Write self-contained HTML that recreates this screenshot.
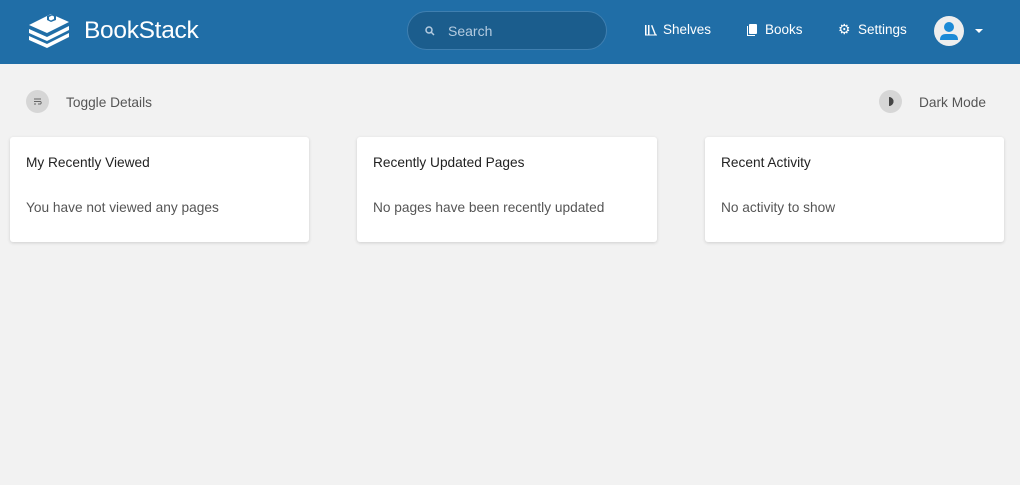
<!DOCTYPE html>
<html><head><style>
*{box-sizing:border-box;margin:0;padding:0}
body{width:1020px;height:485px;background:#f2f2f2;font-family:"Liberation Sans",sans-serif;overflow:hidden;position:relative}
.hdr{position:absolute;left:0;top:0;width:1020px;height:64px;background:#206ea7;color:#fff}
.logo{position:absolute;left:84px;top:17px;font-size:24.5px;letter-spacing:-0.3px}
.search{position:absolute;left:407px;top:11px;width:200px;height:39px;border-radius:20px;background:#1b5d8d;border:1px solid #3f7fb0}
.search span{position:absolute;left:40px;top:11px;font-size:14px;color:#b4cbe0}
.nav{position:absolute;top:22px;font-size:13.5px}
.card{position:absolute;top:137px;width:299px;height:105px;background:#fff;box-shadow:0 1px 3px rgba(0,0,0,.15);border-radius:3px}
.card h3{position:absolute;left:16px;top:18px;font-size:13.7px;font-weight:normal;color:#222}
.card p{position:absolute;left:16px;top:63px;font-size:13.7px;color:#555}
.ic{position:absolute;top:90px;width:23px;height:23px;border-radius:50%;background:#d6d6d6}
.lbl{position:absolute;top:95px;font-size:13.7px;color:#555}
</style></head><body>
<div class="hdr">
<svg style="position:absolute;left:28px;top:11px" width="42" height="38" viewBox="0 0 42 38" fill="#fff">
<path d="M1 14 L23 3 L41 11 L19 22 Z"/>
<path d="M1 18 L19 26 L41 15 L41 19 L19 30 L1 22 Z"/>
<path d="M1 25 L19 33 L41 22 L41 26 L19 37 L1 29 Z"/>
<path d="M19 5 L24 3 L28 5 L28 9 L23 11 L19 9 Z" fill="#206ea7"/>
<path d="M21 6 L24 4.5 L26 5.5 L26 8 L23 9.5 L21 8.5 Z"/>
</svg>
<div class="logo">BookStack</div>
<div class="search"><svg style="position:absolute;left:17px;top:14px" width="10" height="10" viewBox="0 0 10 10"><circle cx="4" cy="4" r="3" stroke="#b4cbe0" stroke-width="1.5" fill="none"/><path d="M6 6 L9 9" stroke="#b4cbe0" stroke-width="1.5"/></svg><span>Search</span></div>
<svg style="position:absolute;left:645px;top:24px" width="12" height="12" viewBox="0 0 12 12" fill="#fff"><rect x="0" y="1" width="1.5" height="10"/><rect x="3" y="1" width="1.5" height="10"/><path d="M6 1.5 L7.3 1 L11 10.5 L9.7 11 Z"/><rect x="0" y="10.5" width="12" height="1"/></svg>
<div class="nav" style="left:663px">Shelves</div>
<svg style="position:absolute;left:746px;top:24px" width="12" height="12" viewBox="0 0 12 12" fill="#fff"><rect x="3" y="0" width="8" height="10" rx="1"/><path d="M1 2 V12 H9 V11 H2 V2 Z"/></svg>
<div class="nav" style="left:765px">Books</div>
<div class="nav" style="left:838px;top:21px;font-size:14px">⚙</div>
<div class="nav" style="left:858px">Settings</div>
<svg style="position:absolute;left:934px;top:16px" width="30" height="30" viewBox="0 0 30 30"><circle cx="15" cy="15" r="15" fill="#eee"/><circle cx="15" cy="11" r="5" fill="#1c8ad6"/><path d="M6 24 Q6 18 12 18 H18 Q24 18 24 24 Z" fill="#1c8ad6"/></svg>
<svg style="position:absolute;left:975px;top:29px" width="8" height="5"><path d="M0 0 H8 L4 4 Z" fill="#fff"/></svg>
</div>
<div class="ic" style="left:26px"><svg width="23" height="23" viewBox="0 0 23 23"><path d="M8 9 H15 M8 11.5 H14.5 Q16 12.5 14.5 14 H12 M8 14 H10" stroke="#666" stroke-width="1" fill="none"/></svg></div>
<div class="lbl" style="left:66px">Toggle Details</div>
<div class="ic" style="left:879px"><svg width="23" height="23" viewBox="0 0 23 23"><path d="M10 7 A4.5 4.5 0 0 1 10 16 A2.5 4.5 0 0 0 10 7 Z" fill="#444"/><path d="M10 7 A4.5 4.5 0 0 1 14.5 11.5 A4.5 4.5 0 0 1 10 16 L10 7" fill="#444"/></svg></div>
<div class="lbl" style="left:919px">Dark Mode</div>
<div class="card" style="left:10px"><h3>My Recently Viewed</h3><p>You have not viewed any pages</p></div>
<div class="card" style="left:357px;width:300px"><h3>Recently Updated Pages</h3><p>No pages have been recently updated</p></div>
<div class="card" style="left:705px"><h3>Recent Activity</h3><p>No activity to show</p></div>
</body></html>
